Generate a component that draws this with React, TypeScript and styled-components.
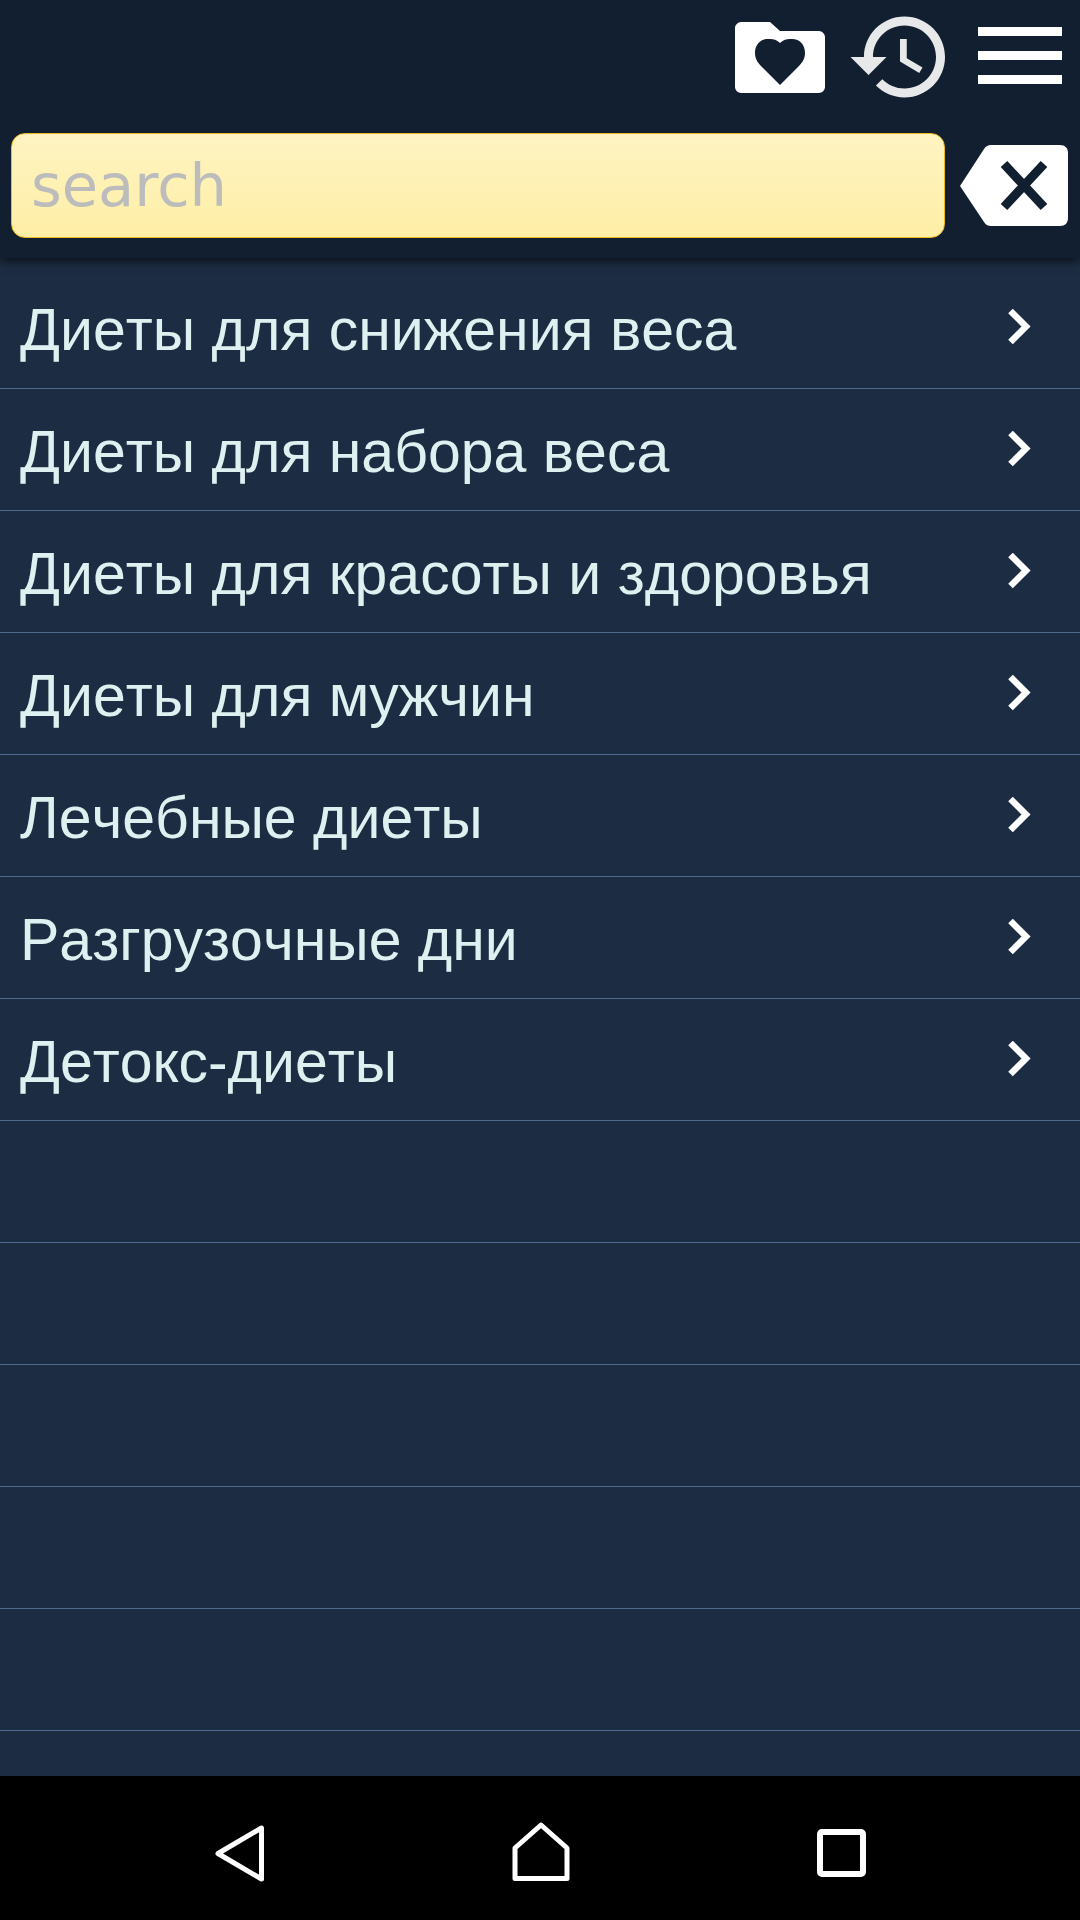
import styled, { createGlobalStyle } from 'styled-components';

const items = [
  'Диеты для снижения веса',
  'Диеты для набора веса',
  'Диеты для красоты и здоровья',
  'Диеты для мужчин',
  'Лечебные диеты',
  'Разгрузочные дни',
  'Детокс-диеты',
];

const GlobalStyle = createGlobalStyle`
  html, body {
    margin: 0;
    padding: 0;
    background: #1c2b42;
  }
`;

const Page = styled.div`
  width: 1080px;
  height: 1920px;
  display: flex;
  flex-direction: column;
  overflow: hidden;
  background: #1c2c42;
  font-family: 'Liberation Sans', Arial, sans-serif;
`;

const Header = styled.header`
  height: 258px;
  flex: none;
  position: relative;
  z-index: 1;
  background: #121f30;
  box-shadow: 0 2px 10px rgba(0, 0, 0, 0.75);
`;

const Toolbar = styled.div`
  height: 114px;
  display: flex;
  align-items: center;
  justify-content: flex-end;
  padding-right: 18px;
`;

const ToolIcon = styled.svg<{ $gap?: number }>`
  display: block;
  flex: none;
  margin-left: ${(p) => p.$gap ?? 0}px;
`;

const SearchRow = styled.div`
  height: 144px;
  box-sizing: border-box;
  display: flex;
  align-items: center;
  padding: 0 12px 2px 11px;
  gap: 15px;
`;

const SearchBox = styled.div`
  flex: 1;
  height: 105px;
  box-sizing: border-box;
  display: flex;
  align-items: center;
  padding: 0 0 0 19px;
  border: 1px solid #eeb91e;
  border-radius: 14px;
  background: linear-gradient(#fef4c2, #feeea5);
  color: #bcbcbc;
  font-family: 'DejaVu Sans', sans-serif;
  font-size: 59px;
`;

const List = styled.div`
  flex: 1;
  padding-top: 9px;
  min-height: 0;
`;

const Row = styled.div`
  height: 122px;
  box-sizing: border-box;
  display: flex;
  align-items: center;
  justify-content: space-between;
  padding: 0 47px 0 20px;
  border-bottom: 1px solid #4f6a8f;
  color: #dff0f1;
  font-size: 59px;
  font-kerning: none;
`;

const Label = styled.span`
  margin-top: 4px;
`;

const NavBar = styled.nav`
  height: 144px;
  flex: none;
  box-sizing: border-box;
  display: flex;
  align-items: center;
  justify-content: center;
  padding-top: 10px;
  gap: 247px;
  background: #000;
`;

const Chevron = () => (
  <svg width="26" height="38" viewBox="0 0 26 38">
    <path d="M3.5 2 L19 17.5 L3.5 33" fill="none" stroke="#fff" strokeWidth="6.5" />
  </svg>
);

const App = () => {
  return (
    <Page>
      <GlobalStyle />
      <Header>
        <Toolbar>
          <ToolIcon width="90" height="71" viewBox="0 0 90 71">
            <path
              fill="#fff"
              fillRule="evenodd"
              d="M6 0H35L45 9H84C87 9 90 12 90 15V65C90 68 87 71 84 71H6C3 71 0 68 0 65V6C0 3 3 0 6 0ZM45 21C41 17 37 17 33 17C25 17 20 23 20 31C20 38 24 42 28 46L45 63L62 46C66 42 70 38 70 31C70 23 65 17 57 17C53 17 49 17 45 21Z"
            />
          </ToolIcon>
          <ToolIcon $gap={21} width="108" height="108" viewBox="0 0 24 24">
            <path
              fill="#e6e8ea"
              d="M13 3c-4.97 0-9 4.03-9 9H1l3.89 3.89.07.14L9 12H6c0-3.87 3.13-7 7-7s7 3.13 7 7-3.13 7-7 7c-1.93 0-3.68-.79-4.94-2.06l-1.42 1.42C8.27 19.99 10.51 21 13 21c4.97 0 9-4.03 9-9s-4.03-9-9-9zm-1 5v5l4.28 2.54.72-1.21-3.5-2.08V8H12z"
            />
          </ToolIcon>
          <ToolIcon $gap={24} width="84" height="60" viewBox="0 0 84 60">
            <path fill="#fff" d="M0 0H84V9H0ZM0 24H84V33H0ZM0 48H84V57H0Z" />
          </ToolIcon>
        </Toolbar>
        <SearchRow>
          <SearchBox>search</SearchBox>
          <svg width="108" height="81" viewBox="0 0 108 81">
            <path
              fill="#fff"
              d="M0 41L24 4C26 1 28 0 31 0H100C105 0 108 3 108 8V73C108 78 105 81 100 81H31C28 81 26 80 24 77Z"
            />
            <path d="M44 19L84 62M84 19L44 62" stroke="#121f30" strokeWidth="9" fill="none" />
          </svg>
        </SearchRow>
      </Header>
      <List>
        {items.map((item) => (
          <Row key={item}>
            <Label>{item}</Label>
            <Chevron />
          </Row>
        ))}
        {Array.from({ length: 5 }).map((_, i) => (
          <Row key={i} />
        ))}
      </List>
      <NavBar>
        <svg width="50" height="57" viewBox="0 0 50 57">
          <path d="M3 28.5L46.5 3V54Z" fill="none" stroke="#fff" strokeWidth="5" strokeLinejoin="round" />
        </svg>
        <svg width="58" height="62" viewBox="0 0 58 62">
          <path d="M3 26L29 3L55 26V56.5H3Z" fill="none" stroke="#fff" strokeWidth="5" strokeLinejoin="round" />
        </svg>
        <svg width="49" height="48" viewBox="0 0 49 48">
          <rect x="3" y="3" width="43" height="42" rx="2" fill="none" stroke="#fff" strokeWidth="6" />
        </svg>
      </NavBar>
    </Page>
  );
};

export default App;
